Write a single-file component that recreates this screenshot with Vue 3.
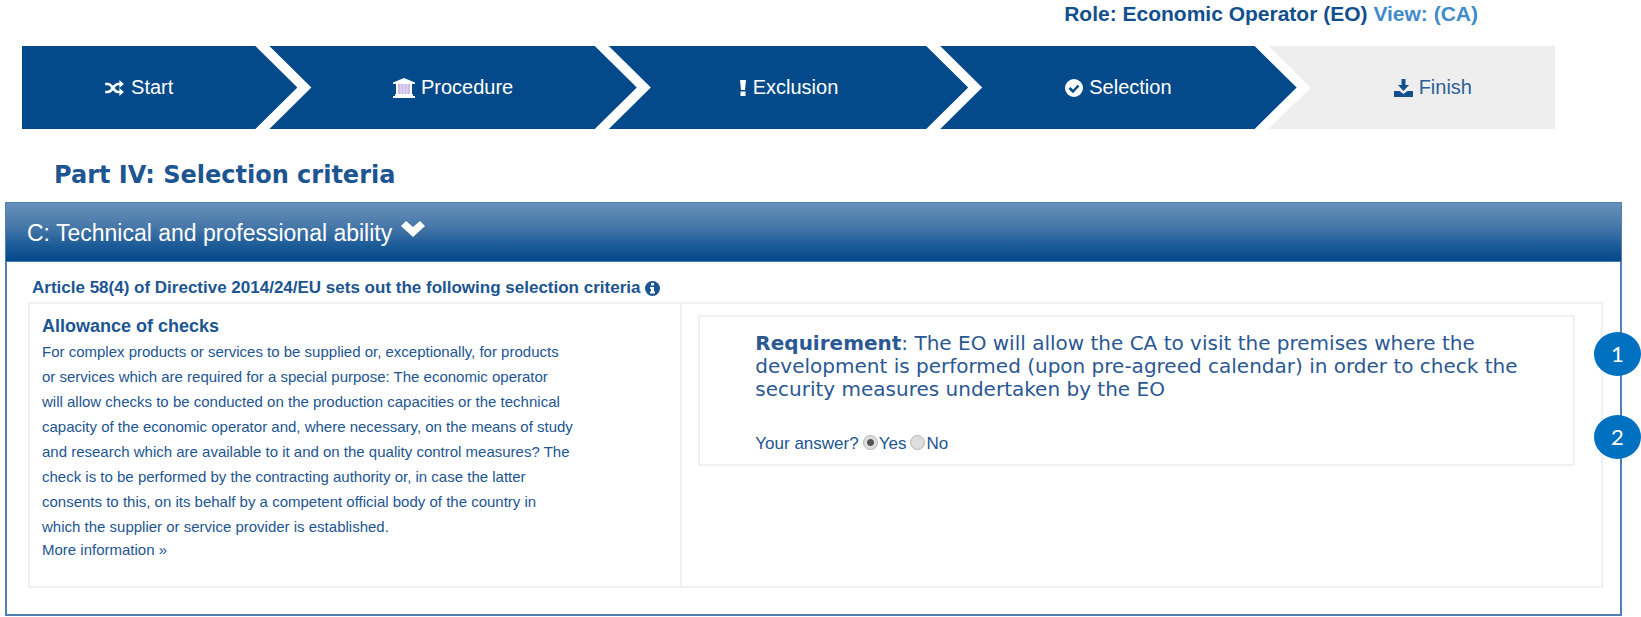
<script setup>
import { ref } from 'vue'

const answer = ref('yes')
const steps = [
  { id: 'start', label: 'Start', grow: 233 },
  { id: 'procedure', label: 'Procedure', grow: 283 },
  { id: 'exclusion', label: 'Exclusion', grow: 275 },
  { id: 'selection', label: 'Selection', grow: 272 },
  { id: 'finish', label: 'Finish', grow: 244 },
]
const description = [
  'For complex products or services to be supplied or, exceptionally, for products',
  'or services which are required for a special purpose: The economic operator',
  'will allow checks to be conducted on the production capacities or the technical',
  'capacity of the economic operator and, where necessary, on the means of study',
  'and research which are available to it and on the quality control measures? The',
  'check is to be performed by the contracting authority or, in case the latter',
  'consents to this, on its behalf by a competent official body of the country in',
  'which the supplier or service provider is established.',
].join('\n')
</script>

<template>
  <main class="page">
    <p class="role">Role: Economic Operator (EO) <a href="#ca">View: (CA)</a></p>

    <ol class="steps">
      <li
        v-for="step in steps"
        :key="step.id"
        class="step"
        :class="step.id"
        :style="{ flexGrow: step.grow }"
      >
        <svg v-if="step.id === 'start'" class="icon" width="21" height="16" viewBox="0 0 21 18" aria-hidden="true">
          <g fill="none" stroke="currentColor" stroke-width="3">
            <path d="M0 4.500H3C8.500 4.500 9 13.500 14.500 13.500H17" />
            <path d="M0 13.500H3C8.500 13.500 9 4.500 14.500 4.500H17" />
          </g>
          <path d="M16 0L21 4.500L16 9ZM16 9L21 13.500L16 18Z" fill="currentColor" />
        </svg>
        <svg v-else-if="step.id === 'procedure'" class="icon" width="22" height="20" viewBox="0 0 22 20" aria-hidden="true">
          <path d="M11 0L22 4.500V6H0V4.500Z M2 16H20V17.500H2Z M0 18H22V20H0Z" fill="currentColor" />
          <path d="M3 6H19V18H3Z" fill="#cdbde8" />
          <path d="M4 6V18M18 6V18" stroke="currentColor" stroke-width="2" />
          <path d="M8 6V16M11 6V16M14 6V16" stroke="#e9e1f7" stroke-width="1" />
          <path d="M2 16H20V20H2Z" fill="currentColor" />
        </svg>
        <svg v-else-if="step.id === 'exclusion'" class="icon" width="8" height="16" viewBox="0 0 8 16" aria-hidden="true">
          <path d="M1 0H7L6 10H2ZM1.500 11.500H6.500V16H1.500Z" fill="currentColor" />
        </svg>
        <svg v-else-if="step.id === 'selection'" class="icon" width="18" height="18" viewBox="0 0 18 18" aria-hidden="true">
          <circle cx="9" cy="9" r="9" fill="currentColor" />
          <path d="M4.500 9L8 12.500L13.500 6.500" fill="none" stroke="#044a8a" stroke-width="2.500" />
        </svg>
        <svg v-else class="icon" width="19" height="18" viewBox="0 0 19 18" aria-hidden="true">
          <path d="M7.500 0H11.500V6H15L9.500 12L4 6H7.500ZM0 12H5.500L9.500 15L13.500 12H19V18H0Z" fill="currentColor" />
        </svg>
        <span>{{ step.label }}</span>
      </li>
    </ol>

    <h1 class="title">Part IV: Selection criteria</h1>

    <section class="panel">
      <h2 class="panel-head">
        <button type="button" class="toggle">
          C: Technical and professional ability
          <svg width="24" height="16" viewBox="0 0 24 16" aria-hidden="true">
            <path d="M0 5L5 0L12 6L19 0L24 5L12 16Z" fill="currentColor" />
          </svg>
        </button>
      </h2>

      <div class="panel-body">
        <h3 class="article">
          <span>Article 58(4) of Directive 2014/24/EU sets out the following selection criteria</span>
          <svg width="15" height="15" viewBox="0 0 15 15" aria-hidden="true">
            <circle cx="7.500" cy="7.500" r="7.500" fill="currentColor" />
            <path d="M6 2H9V4.500H6ZM5 6H9V10.500H10V12.500H5V10.500H6V8H5Z" fill="#fff" />
          </svg>
        </h3>

        <div class="criteria">
          <div class="criterion">
            <h4>Allowance of checks</h4>
            <p class="text">{{ description }}</p>
            <a class="more" href="#more">More information »</a>
          </div>
          <div class="response">
            <div class="requirement">
              <p><strong>Requirement</strong>: The EO will allow the CA to visit the premises where the<br>development is performed (upon pre-agreed calendar) in order to check the<br>security measures undertaken by the EO</p>
              <fieldset class="answer">
                <legend>Your answer?</legend>
                <label><input v-model="answer" type="radio" name="answer" value="yes">Yes</label>
                <label><input v-model="answer" type="radio" name="answer" value="no">No</label>
              </fieldset>
            </div>
          </div>
        </div>
      </div>

      <span class="badge first">1</span>
      <span class="badge second">2</span>
    </section>
  </main>
</template>

<style>
body {
  margin: 0;
  background: #fff;
}
</style>

<style scoped>
.page {
  padding: 0 19px 0 5px;
  font-family: "Liberation Sans", Arial, sans-serif;
  color: #1c5592;
}
p, h1, h2, h3, h4, ol {
  margin: 0;
  padding: 0;
}
.role {
  padding-top: 1px;
  margin-right: 144px;
  text-align: right;
  font-size: 21px;
  line-height: 26px;
  font-weight: bold;
  color: #124f8d;
}
.role a {
  color: #428bca;
  text-decoration: none;
}
.steps {
  display: flex;
  margin: 19px 67px 0 17px;
  list-style: none;
}
.step {
  display: flex;
  flex: 1 1 0;
  align-items: center;
  justify-content: center;
  gap: 6px;
  box-sizing: border-box;
  height: 83px;
  padding: 0 42px;
  font-size: 20px;
  color: #fff;
  background: #044a8a;
  clip-path: polygon(0 0, calc(100% - 42px) 0, 100% 50%, calc(100% - 42px) 100%, 0 100%, 42px 50%);
}
.step + .step {
  margin-left: -28px;
}
.icon {
  flex: none;
}
.start {
  padding-left: 0;
  clip-path: polygon(0 0, calc(100% - 42px) 0, 100% 50%, calc(100% - 42px) 100%, 0 100%);
}
.finish {
  padding-right: 0;
  color: #2d5f98;
  background: #eee;
  clip-path: polygon(0 0, 100% 0, 100% 100%, 0 100%, 42px 50%);
}
.finish .icon {
  color: #134f8c;
}
.title {
  margin: 32px 0 13px 49px;
  font: bold 24px/28px "DejaVu Sans", Verdana, sans-serif;
}
.panel {
  position: relative;
  border: 2px solid #4f7fb3;
}
.panel-head {
  margin: -1px -1px 0;
  border-bottom: 1px solid #3f7dba;
  background: linear-gradient(#6791ba, #4878a9 40%, #1a5a97 75%, #034888);
}
.toggle {
  display: flex;
  align-items: center;
  gap: 9px;
  width: 100%;
  height: 58px;
  padding: 2px 21px 0;
  border: 0;
  background: none;
  font: 23px "Liberation Sans", Arial, sans-serif;
  color: #fff;
}
.toggle svg {
  margin-bottom: 8px;
}
.panel-body {
  padding: 14px 17px 26px 21px;
}
.article {
  display: flex;
  align-items: center;
  gap: 5px;
  padding-left: 4px;
  font-size: 17px;
  line-height: 24px;
  margin-bottom: 2px;
}
.criteria {
  display: grid;
  grid-template-columns: 652fr 923fr;
  border: 2px solid #f1f1f1;
}
.criterion {
  padding: 9px 12px 25px;
}
.criterion h4 {
  font-size: 18px;
  line-height: 26px;
}
.text {
  font-size: 15px;
  line-height: 25px;
  white-space: pre-line;
}
.more {
  display: block;
  font-size: 15px;
  line-height: 22px;
  color: inherit;
  text-decoration: none;
}
.response {
  border-left: 2px solid #f1f1f1;
  padding: 11px 26px 0 16px;
}
.requirement {
  padding: 15px 24px 9px 55px;
  border: 2px solid #f1f1f1;
}
.requirement p {
  font: 20px/23px "DejaVu Sans", Verdana, sans-serif;
  color: #2b5893;
}
.answer {
  display: flex;
  align-items: center;
  gap: 4px;
  margin: 32px 0 0;
  padding: 0;
  border: 0;
  font-size: 17px;
  line-height: 22px;
}
.answer legend {
  float: left;
  padding: 0;
}
.answer label {
  display: flex;
  align-items: center;
  gap: 1px;
}
.answer input {
  appearance: none;
  box-sizing: border-box;
  width: 15px;
  height: 15px;
  margin: 0 0 4px;
  border: 1px solid #b5b5b5;
  border-radius: 50%;
  background: #dedede;
}
.answer input:checked {
  background: radial-gradient(circle, #555 0 3px, #dedede 4px);
}
.badge {
  position: absolute;
  right: -21px;
  width: 47px;
  height: 44px;
  border-radius: 50%;
  background: #0070c0;
  color: #fff;
  font: 22px/44px Lato, sans-serif;
  text-align: center;
}
.first {
  top: 128px;
}
.second {
  top: 211px;
}
</style>
